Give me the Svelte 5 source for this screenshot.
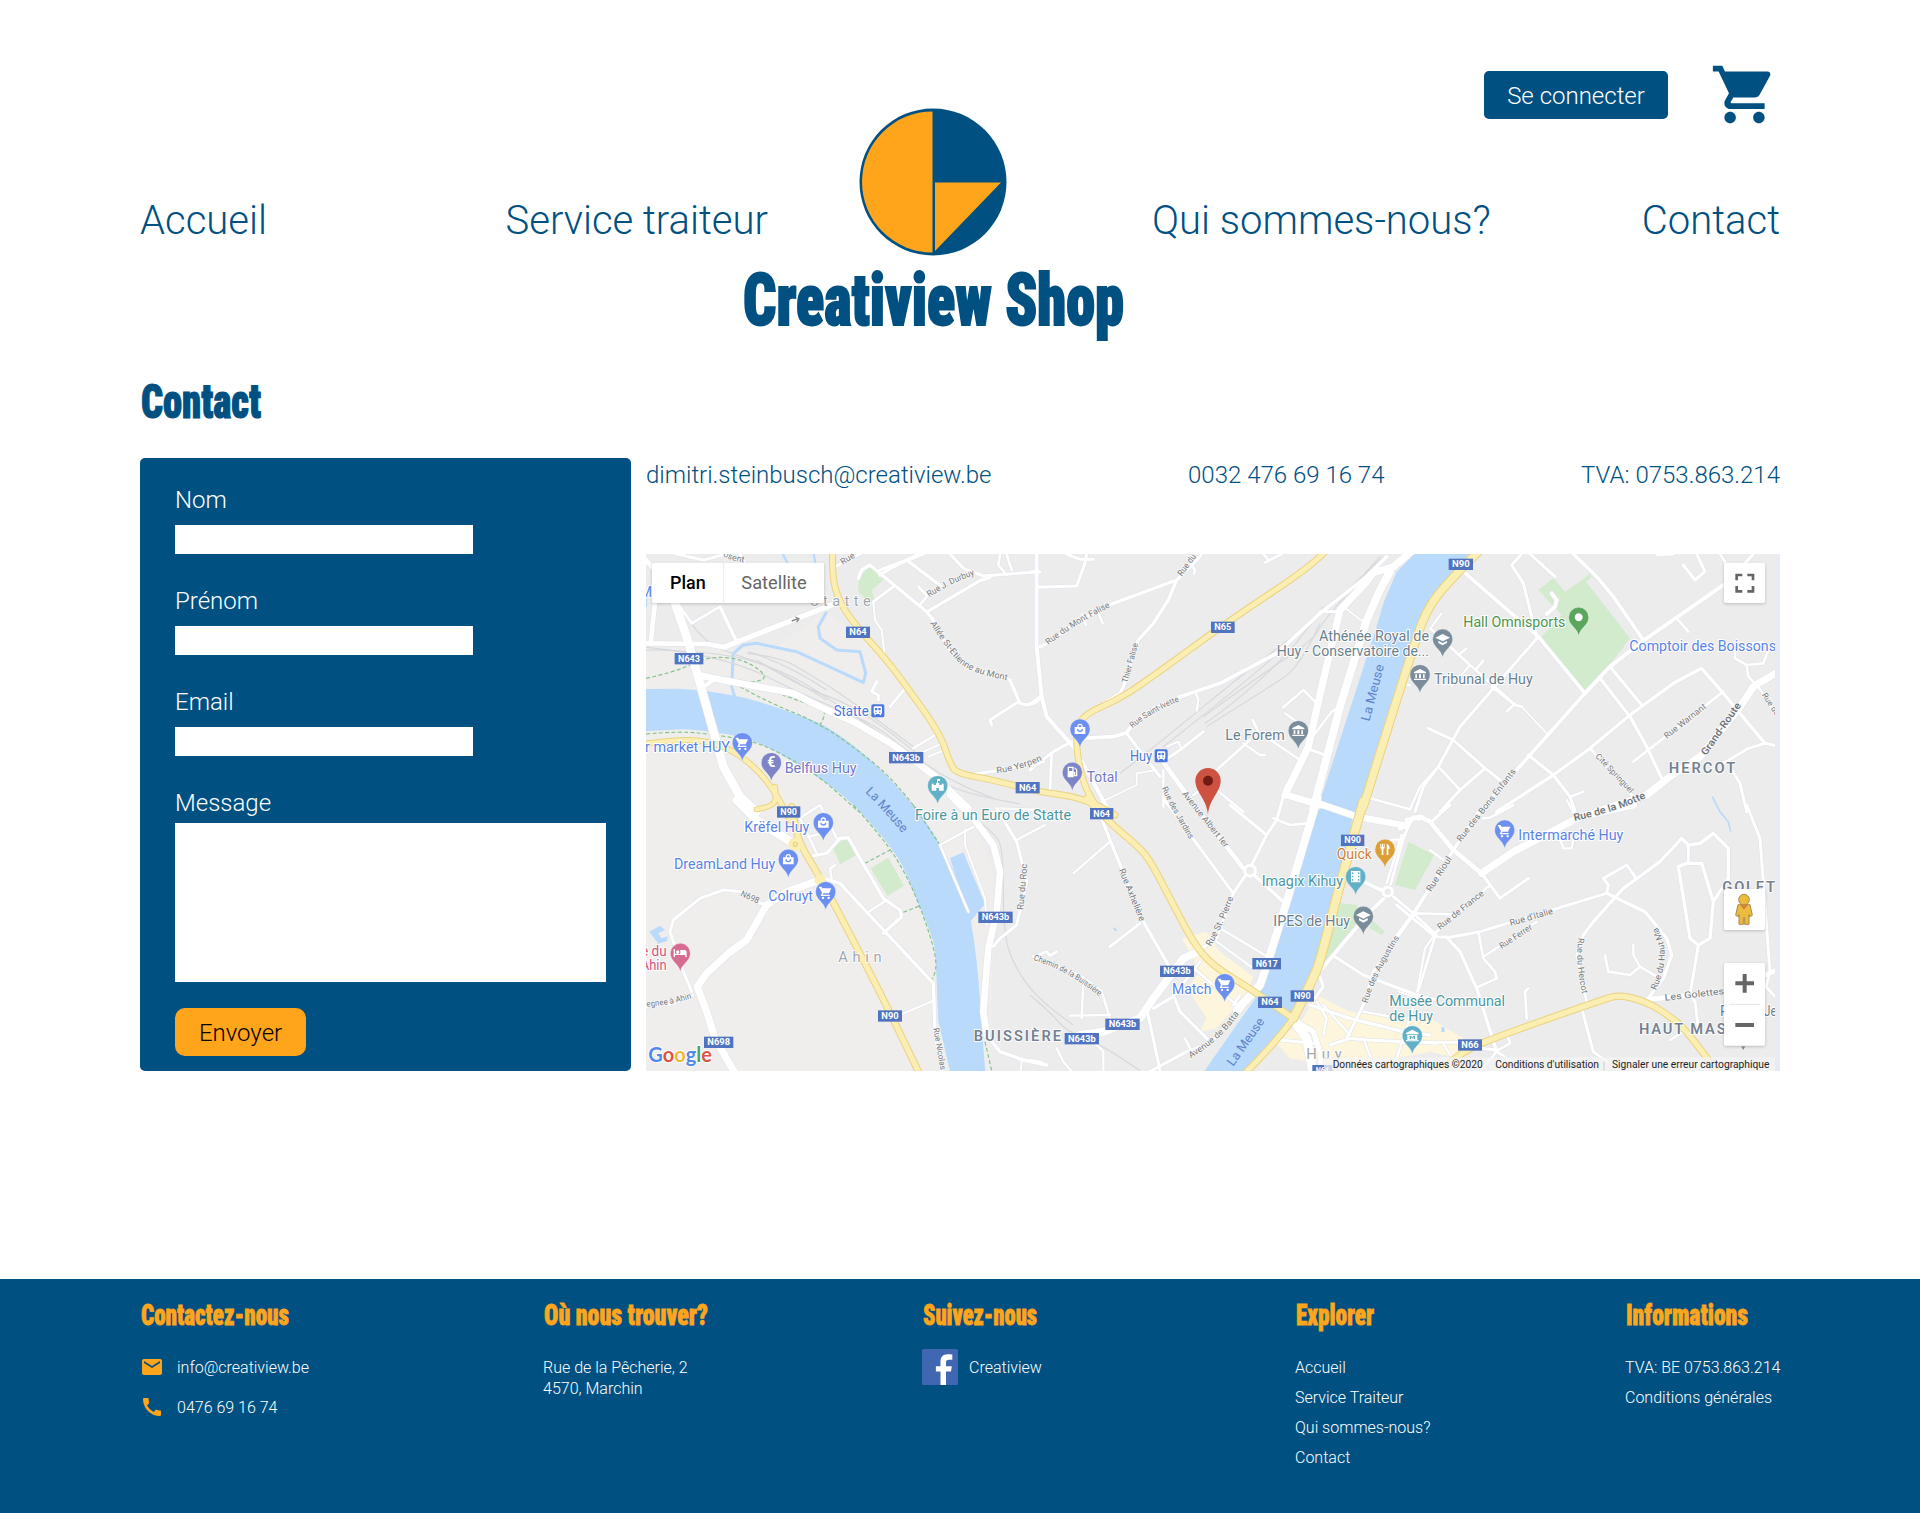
<script>
  // The map is drawn in a 3402 x 1551 space, split in six tiles with their own origin.
  const origins = {
    a: [-18, -42], b: [1152, -42], c: [2262, -42],
    d: [-18, 753], e: [1152, 753], f: [2262, 753]
  };
  const at = (t, dx = 0, dy = 0) => `translate(${origins[t][0] + dx} ${origins[t][1] + dy})`;
  const pts = (s) => s.trim().split(/\s+/).map((p) => p.split(',').map(Number));
  const line = (s) => 'M' + pts(s).map((p) => p.join(' ')).join('L');
  // Rounds the inner vertices of a polyline through its midpoints.
  const smooth = (s) => {
    const p = pts(s);
    if (p.length < 3) return line(s);
    let d = `M${p[0][0]} ${p[0][1]}`;
    for (let i = 1; i < p.length - 1; i++) {
      const last = i === p.length - 2;
      const ex = last ? p[i + 1][0] : (p[i][0] + p[i + 1][0]) / 2;
      const ey = last ? p[i + 1][1] : (p[i][1] + p[i + 1][1]) / 2;
      d += `Q${p[i][0]} ${p[i][1]} ${ex} ${ey}`;
    }
    return d;
  };
  const length = (s) => {
    const p = pts(s);
    let n = 0;
    for (let i = 1; i < p.length; i++) n += Math.hypot(p[i][0] - p[i - 1][0], p[i][1] - p[i - 1][1]);
    return n * (p.length > 2 ? 0.97 : 1);
  };

  const roadText = {
    a: `10|240,200 290,305;8|95,165 155,250 240,200;14|45,190 32,310;16|255,320 600,185;14|18,310 200,312 255,322;14|18,60 60,110
26|105,190 140,290 180,430 250,680 300,770 350,815;20|175,405 220,415 460,460 540,500 650,550 760,615 880,705 985,805
12|185,445 222,418;10|655,115 665,90 690,75 860,215 880,240 920,320 980,380 1110,420 1140,490 1160,495 1185,488 1205,470
10|720,90 800,60 905,140;10|800,62 850,42;10|720,105 760,80 860,30;9|930,42 970,85 1030,108 1200,95;10|862,215 1020,122 1050,112
8|835,140 862,168 838,196;9|590,78 660,42;8|700,185 760,140;6|700,185 705,240 725,270 735,355;9|1055,555 1050,540 1135,485
9|710,425 695,455 715,465 715,480;8|750,500 800,440;7|820,625 895,580;6|840,640 910,608;6|865,650 915,630;9|985,705 1070,692 1210,665
8|1080,42 1075,75 1100,105;8|1100,42 1115,90;9|110,42 190,60 260,42;8|300,42 315,68`,
    b: `12|20,42 20,320 35,470 50,530 130,620 165,680 235,810;9|20,142 140,138 165,70 170,42;9|110,42 150,58 190,58;8|0,95 20,95;8|0,492 35,465
10|30,320 50,312 140,245 250,190 440,120 500,60 515,42;10|440,120 415,180 370,250 325,300 280,440 270,460 220,490
7|155,222 168,255;7|200,205 218,250;8|480,70 495,90 492,102;8|700,42 715,60;8|705,68 755,42
11|160,595 250,590 290,578 310,550 370,505 450,470 570,430 740,340 870,220 1010,110 1070,50;9|290,580 390,710;9|0,690 70,635 135,600;8|65,640 60,750
7|498,460 505,480 500,512;5|1008,252 940,200;22|1150,30 1090,80 1030,98 1010,125 930,210 880,420 835,620 765,765
24|1080,95 1050,150 1010,240 930,500 850,805;8|870,215 930,215;8|760,502 820,450 858,488;7|765,520 815,556;9|830,625 885,645
7|840,600 905,515 930,498;8|668,540 685,575 810,660;7|640,610 690,645 705,645;8|560,690 610,645 660,600;14|402,670 490,790 640,985
9|405,660 450,630 520,575;6|410,620 445,605 455,630;7|400,690 400,750 400,800;8|490,765 520,745;8|560,750 640,815;5|215,785 320,735 320,700 380,690
20|770,765 870,795;7|1120,430 1140,436;8|1020,775 1140,808;7|1140,808 1170,740 1215,690`,
    c: `11|190,95 415,290 555,460;11|520,42 590,110 640,170 730,300;9|365,42 335,75 370,130 390,210 410,290;9|390,42 465,110
12|440,222 465,200 470,180 455,160;12|555,460 630,380 730,302 970,135;11|555,460 390,645 230,825;9|415,290 180,560 115,680 70,740 45,815
8|275,440 345,495 365,500;5|365,500 440,580;10|598,412 690,530 740,620 785,715;10|630,380 725,495
10|290,815 460,705 570,625 690,525 820,430 905,385 970,460 1095,610;8|700,665 970,455;9|570,625 700,770;10|385,645 460,705 510,770 525,815;8|510,770 550,755
9|85,565 160,600 250,680 300,720;9|255,685 180,750 120,815;8|115,680 180,750;8|830,235 865,275;9|850,75 885,120 915,95 890,42;8|960,42 985,80;10|1060,42 1000,110
9|970,670 1045,625 1095,610 1130,618;9|990,680 1020,730 1040,815;8|1090,305 1005,320 1005,355 1040,375 1090,370 1105,330;8|1040,375 1045,410 1075,440
8|1075,440 1125,520;8|90,265 210,375 290,445 340,490;7|175,345 200,325;8|230,385 250,362;6|155,440 210,375;6|95,260 125,220;7|345,490 320,515;9|770,45 820,42
22|590,815 740,765 810,710 900,650 1020,500 1060,440 1130,398;6|345,270 370,255`,
    d: `9|155,560 130,500 90,380 100,345 180,280 250,255 310,260 360,295 390,298;22|540,225 440,260 380,300 320,405 265,445 200,505 172,545 200,620 225,700 285,805
26|290,-15 350,45 465,118;6|18,606 100,598 160,570;7|480,40 540,0 590,100;7|480,40 530,145;6|505,95 550,85;10|520,152 560,145 600,100 625,98 660,160 730,280 780,315 785,335 730,385
7|575,220 570,192 585,180;10|560,222 600,235 880,535 885,680 905,805;7|680,325 740,285;6|780,630 885,585;7|900,120 1000,65;7|900,120 985,320;6|975,75 975,120 1035,280 1040,360
20|930,-30 1000,40 1060,120 1080,200 1070,320 1045,430 1030,620 1040,690;10|1040,690 1080,740 1150,765 1220,780;6|1145,765 1142,800
9|1060,425 1080,400 1130,360 1160,230 1130,110 1070,10;7|1130,105 1215,60;7|1080,10 1200,15`,
    e: `10|215,40 240,105 340,350 415,480;7|240,110 130,205;8|330,355 240,425;24|505,440 460,460 370,580 330,640 220,680 150,690
9|350,610 392,805;9|370,610 430,575 510,470;9|430,570 450,620 540,710;8|480,480 620,600 670,560;9|600,0 710,90;9|770,-60 740,45 710,90 660,190 610,265
8|730,40 780,60 830,55;9|400,-20 610,265;9|610,265 560,400 500,440;10|675,212 770,300;7|570,370 720,460;6|560,410 670,490;9|350,805 470,740 540,715 630,620 690,540;8|630,570 610,600
8|10,455 50,440 60,452 80,440;8|10,455 150,510 215,560 240,640;7|160,530 155,640;7|120,632 240,630;7|170,690 220,740 220,805;7|80,730 100,770 130,805;8|0,765 35,772
7|465,700 490,750;11|1000,230 1060,258;12|1060,282 1015,325 860,510;9|1090,275 1150,325 1220,390;9|1082,238 1120,100 1145,40;8|1070,235 1115,90
9|1085,105 1115,105;9|915,455 1000,510 1160,570 1220,585;9|950,700 1000,600 1030,500 1150,330 1280,120;10|840,600 960,640 1120,680 1200,690;9|900,720 960,700 1010,705 1220,715
28|790,645 830,700 850,805;16|800,650 850,680 870,740 875,805;9|855,580 880,545 870,515;7|860,590 890,640 880,690;9|750,705 850,715;24|620,615 690,540 720,450 770,290 862,-20
20|850,-10 980,35 1130,62;14|1110,70 1130,62 1150,38 1170,40;7|1000,620 1110,640;7|960,690 880,600;7|1160,570 1185,430 1220,380;7|1000,700 1040,805`,
    f: `7|500,-15 525,30;8|250,40 270,38 340,0;9|95,50 150,0;14|20,45 60,35 90,50 160,135 245,205;22|245,205 340,140 540,35 700,0;9|245,205 300,280 385,220
9|265,245 110,380;9|-10,300 105,395 150,397 240,380 620,265 625,240 610,220 680,180 705,215;10|140,397 180,440 230,550 290,740
8|230,548 290,520 285,500 250,460 235,380;7|250,455 410,350;8|105,395 45,590 -10,760;8|40,325 170,328;9|240,15 160,135 40,325 -20,405
10|550,390 580,350 670,250 780,170 845,100 865,120 900,115 940,85 985,130 985,220 940,290 930,400 895,420 870,400 835,185 860,175 905,175 940,290;9|865,120 865,175
9|895,420 870,570 885,590 895,670;10|620,265 735,320 800,400 815,450 790,520 745,580;8|550,390 530,450 560,590;8|615,450 625,500 690,510 720,485 770,515;7|720,485 700,450 700,420
15|745,583 980,560 1130,495;8|380,640 375,560 385,550;9|545,610 580,740 620,770;8|285,740 330,715 320,680;8|0,713 180,712;8|240,800 290,740 330,765
7|480,100 490,130 515,130 520,105;7|90,135 130,165;7|130,715 150,750;9|240,730 290,735;7|810,705 850,680;9|1040,0 1080,100 1110,500 1098,545 1130,580;6|-5,560 40,575`
  };
  const roads = Object.entries(roadText).flatMap(([t, s]) =>
    s.split(/[;\n]/).map((r) => {
      const [w, p] = r.split('|');
      return { t, w: +w, d: line(p) };
    })
  );

  const yellow = [
    ['a', 15, '578,30 575,110 600,190 650,260 740,360 800,440 900,580 930,670 950,700 1060,720 1200,757 1340,775 1425,825'],
    ['a', 13, '10,612 130,595 230,610 310,650 400,740 450,840'],
    ['a', 12, '405,740 410,775 395,800 350,808'],
    ['d', 16, '455,5 465,60 480,118 530,200 600,330 740,600 840,810'],
    ['b', 15, '890,30 850,75 600,240 340,430 260,480 170,520 140,560 140,640 165,750 200,800'],
    ['c', 22, '240,30 170,100 90,190 45,300 -110,800'],
    ['e', 24, '1000,-10 940,200 870,470 850,520 790,640'],
    ['e', 16, '790,640 740,710 645,805'],
    ['e', 16, '170,-20 235,50 320,120 360,165 430,300 500,430 560,490 660,550 790,640'],
    ['f', 16, '110,810 170,745 320,685 620,580 660,570 740,590 820,640 870,690 955,805']
  ];

  const rails = [
    ['a', '18,330 240,332 450,400 600,500 740,590 870,700 960,760 1140,792'], ['a', '18,322 250,345 500,470 700,550 790,625 940,730 1060,775'],
    ['a', '320,340 420,350 520,410 570,440 700,530 820,620'], ['a', '120,200 170,280 240,330 400,380 560,480'],
    ['a', '325,335 440,370 560,450'], ['a', '350,360 480,440 600,480 720,550 830,640'],
    ['b', '1075,50 870,230 640,400 400,600 270,700'], ['b', '1060,50 900,200 800,290 630,440 400,620'],
    ['b', '1050,50 880,240 850,300 700,400 520,530'], ['b', '870,250 810,380 720,440 530,560'], ['b', '880,200 800,320 600,500 525,550'],
    ['d', '980,20 1060,80 1090,130 1090,380 1120,480 1200,590 1300,660'], ['e', '0,570 60,620 110,680 220,720 330,797']
  ];

  const dashes = [
    ['a', '18,415 110,395 200,350 300,355 370,395 375,425 300,430'], ['a', '300,420 420,462 540,505 560,520 540,555'],
    ['a', '300,440 380,485 540,550 680,650 770,730 835,815'], ['a', '18,582 120,573 230,585 350,605 470,665 570,735 655,815'],
    ['d', '820,0 900,120'], ['d', '640,0 730,100 800,210 850,330 885,440 890,500 875,525'], ['d', '675,175 750,135'], ['d', '790,322 840,302'], ['d', '1035,710 1055,797']
  ];

  const greens = [
    ['a', '655,125 685,75 730,120 695,150 705,185 690,190 655,155'],
    ['c', '415,150 460,115 495,155 550,118 570,100 575,110 558,125 690,295 640,360 555,455 425,290 485,225'],
    ['d', '575,120 625,100 650,150 600,178'], ['d', '692,190 745,158 792,243 742,273'],
    ['e', '1135,110 1213,150 1155,255 1095,240'], ['e', '930,295 980,300 995,340 960,400 870,500 890,420'], ['e', '1025,345 1065,380 1055,390 1020,370']
  ];
  const creams = [
    ['e', '455,400 530,380 570,440 670,515 640,580 560,670 510,680 530,640 470,550 510,500'],
    ['e', '860,570 960,620 1100,640 1200,640 1300,700 1290,760 1200,740 960,790 780,760 735,710 820,640']
  ];

  const shields = [
    ['a', 'N64', 618, 260, 72], ['a', 'N643', 104, 339, 86], ['a', 'N643b', 747, 636, 103], ['a', 'N64', 1127, 726, 72],
    ['b', 'N65', 543, 245, 71], ['c', 'N90', 146, 56, 73], ['d', 'N90', 411, 4, 70], ['d', 'N643b', 1015, 320, 103],
    ['d', 'N90', 714, 616, 72], ['d', 'N698', 192, 695, 88], ['e', 'N64', 180, 9, 70], ['e', 'N90', 933, 89, 70],
    ['e', 'N643b', 390, 482, 102], ['e', 'N617', 667, 459, 86], ['e', 'N64', 684, 575, 72], ['e', 'N90', 782, 556, 70],
    ['e', 'N643b', 226, 641, 103], ['e', 'N643b', 104, 684, 103], ['f', 'N66', 174, 703, 72], ['e', 'N64', 847, 780, 60]
  ];

  const blue = '#5a83e6', violet = '#7478c4', slate = '#6a7f8d', teal = '#4b979f';
  const labels = [
    ['a', 'r market HUY', 15, 637, 255, blue], ['a', 'Belfius Huy', 434, 698, 216, violet], ['a', 'Statte', 581, 527, 105, '#4a76d8'],
    ['b', 'Total', 170, 725, 93, violet], ['b', 'Huy', 300, 663, 66, '#4a76d8'], ['b', 'Le Forem', 586, 601, 178, slate],
    ['b', 'Athénée Royal de', 867, 304, 330, slate], ['b', 'Huy - Conservatoire de...', 740, 347, 457, slate],
    ['c', 'Hall Omnisports', 190, 261, 306, '#4c9450'], ['c', 'Tribunal de Huy', 102, 433, 296, slate], ['c', 'Comptoir des Boissons', 688, 334, 440, blue],
    ['d', 'Foire à un Euro de Statte', 825, 45, 468, teal], ['d', 'Krëfel Huy', 313, 82, 195, blue], ['d', 'DreamLand Huy', 102, 192, 304, blue],
    ['d', 'Colruyt', 385, 288, 134, blue], ['d', 'e du', 3, 452, 77, '#d3527f'], ['d', 'Ahin', 2, 495, 78, '#d3527f'],
    ['e', 'Quick', 920, 162, 106, '#cf7f2f'], ['e', 'Imagix Kihuy', 695, 244, 244, teal], ['e', 'IPES de Huy', 730, 362, 230, slate],
    ['e', 'Match', 426, 567, 118, blue], ['e', 'Musée Communal', 1078, 604, 347, teal], ['e', 'de Huy', 1078, 648, 131, teal],
    ['f', 'Intermarché Huy', 355, 105, 315, blue], ['f', 'P', 960, 634, 26, slate], ['f', 'Je', 1092, 634, 38, slate], ['a', 'M', 0, 172, 36, blue]
  ];
  const places = [
    ['c', 'HERCOT', 806, 699, 200, true], ['d', 'BUISSIÈRE', 1001, 707, 262, true], ['f', 'GOLET', 967, 262, 158, true],
    ['f', 'HAUT MAS', 717, 687, 260, true], ['a', 'Statte', 510, 198, 182, false], ['d', 'Ahin', 595, 471, 130, false], ['e', 'Huy', 829, 762, 106, false]
  ];

  const streets = [
    ['a', 'osent', '248,48 280,64 315,68', 26], ['a', 'Rue', '608,75 648,50', 26], ['a', 'Rue J. Durbuy', '868,172 930,130 1010,102', 26],
    ['a', 'Allée St-Etienne au Mont', '870,250 925,335 990,400 1108,422', 26], ['a', 'Rue Yerpen', '1070,700 1140,692 1212,658', 26],
    ['b', 'Rue du Mont Falise', '55,315 130,255 248,197', 26], ['b', 'Rue du', '455,110 500,48', 26], ['b', 'Thier Falise', '292,430 325,310', 25],
    ['b', 'Rue Saint-Ivette', '308,565 365,515 453,482', 25], ['b', 'Rue des Jardins', '395,745 420,800 482,905', 25], ['b', 'Avenue Albert Ier', '455,762 585,925', 26],
    ['c', 'Rue Warnant', '800,597 922,502', 26], ['c', 'Cité Springuel', '585,650 692,762', 25], ['c', 'Rue de', '1085,465 1128,530', 24],
    ['f', 'Rue des Bons Enfants', '182,112 350,-102', 26], ['d', 'N698', '300,272 355,297', 26], ['d', 'egnee à Ahin', '20,605 90,602 160,578', 25],
    ['d', 'Rue Nicolas', '880,670 902,797', 25], ['d', 'Rue du Roc', '1150,315 1162,175', 27], ['e', 'Rue Axhelière', '266,195 330,352', 27],
    ['e', 'Rue St. Pierre', '542,425 585,350 612,272', 27], ['e', 'Chemin de la Buissière', '10,465 120,500 212,578', 25],
    ['e', 'Avenue de Batta', '482,760 575,705 630,622', 26], ['e', 'Rue des Augustins', '1013,595 1035,510 1112,393', 26],
    ['f', 'Rue Rioul', '93,262 157,160', 27], ['f', 'Rue de France', '120,375 255,267', 26], ['f', "Rue d'Italie", '332,363 462,325', 27],
    ['f', 'Rue Ferrer', '305,432 400,370', 26], ['f', 'Rue du Hercot', '535,398 525,475 548,572', 26], ['f', 'Rue du Haut Mas', '768,557 820,440 768,362', 26],
    ['f', 'Les Golettes', '795,587 975,567', 28], ['c', 'Grand-Route', '918,648 1025,495', 30], ['f', 'Rue de la Motte', '523,48 650,20 745,-25', 30]
  ];
  const rivers = [['a', 'La Meuse', '675,757 720,800 792,885'], ['b', 'La Meuse', '1018,545 1063,375'], ['e', 'La Meuse', '610,785 706,648']];

  const B = '#6c8ff0', V = '#7d84c8', G = '#7b8d9a', T = '#61b0c7';
  const pins = [
    ['a', 307, 608, B, 'cart'], ['a', 394, 668, V, 'euro'], ['a', 893, 737, T, 'castle'], ['b', 150, 567, B, 'bag'], ['b', 127, 697, V, 'fuel'],
    ['b', 805, 572, G, 'bank'], ['c', 128, 297, G, 'edu'], ['c', 60, 404, G, 'bank'], ['c', 536, 232, '#5ba65c', 'dot'], ['d', 550, 53, B, 'bag'],
    ['d', 445, 163, B, 'bag'], ['d', 557, 260, B, 'cart'], ['d', 121, 445, '#d76c93', 'bed'], ['e', 1065, 133, '#dd9f35', 'fork'], ['e', 977, 215, T, 'film'],
    ['e', 1000, 334, G, 'edu'], ['e', 584, 536, B, 'cart'], ['e', 1147, 692, T, 'museum'], ['f', 314, 75, B, 'cart']
  ];
  const glyphs = {
    cart: 'M-19-15h7l2 5h27l-7 15h-17l-2 4h21v4h-27l4-10-8-14h-2zM-8 15a3.5 3.5 0 1 0 .1 0zM9 15a3.5 3.5 0 1 0 .1 0z',
    bag: 'M-16-6h8v-2a8 8 0 0 1 16 0v2h8v21h-32zM-4-6h8v-2a4 4 0 0 0-8 0zM-9 0a9 9 0 0 0 18 0h-4a5 5 0 0 1-10 0z',
    castle: 'M-18-6h6v4h7v-6h3v-12h9v6h-6v6h4v6h7v-4h6v21h-14v-8h-8v8h-14z',
    fuel: 'M-14-17h18v16h5v10h2v-16l-5-5 2-3 7 7v20h-10v-10h-1v13h-18zM-10-13v9h10v-9z',
    bank: 'M0-17l18 9v4h-36v-4zM-14-1h5v11h-5zM-3-1h6v11h-6zM9-1h5v11h-5zM-18 12h36v4h-36z',
    edu: 'M0-15l22 11-22 11-22-11zM-13 5l13 7 13-7v7l-13 7-13-7z',
    dot: 'M0-12a12 12 0 1 0 .1 0z',
    bed: 'M-20-13h4v14h16v-11h12a7 7 0 0 1 7 7v14h-4v-6h-31v6h-4zM-8-9a5 5 0 1 0 .1 0z',
    fork: 'M-14-17h3v10h2v-10h3v10h2v-10h3v13l-4 5v16h-5v-16l-4-5zM5-17q9 2 9 16h-4v18h-5z',
    film: 'M-14-17h28v34h-28zM-11-13v5h4v-5zM-11-3v5h4v-5zM-11 7v5h4v-5zM7-13v5h4v-5zM7-3v5h4v-5zM7 7v5h4v-5z',
    museum: 'M0-18l19 10v4h-38v-4zM-15-2h30v16h-30zM-8 11h4v-7l4 5 4-5v7h4v-11h-4l-4 5-4-5h-4zM-19 13h38v4h-38z',
    euro: ''
  };

  const fields = ['Nom', 'Prénom', 'Email'];
  const explore = ['Accueil', 'Service Traiteur', 'Qui sommes-nous?', 'Contact'];
</script>

{#snippet display(text, w, size, cls)}
  <svg class="display {cls}" width={w} height={size * 1.2} role="img" aria-label={text}>
    <text x="1" y={size} font-size={size} textLength={w - 1} lengthAdjust="spacingAndGlyphs">{text}</text>
  </svg>
{/snippet}

{#snippet pin([t, x, y, color, icon])}
  <g transform={at(t, x, y)}>
    <path class="pin" fill={color} d="M0 55C-4 32-30 24-30 0A30 30 0 0 1 30 0C30 24 4 32 0 55z" />
    {#if icon === 'euro'}
      <text class="euro" x="0" y="14">€</text>
    {:else}
      <path fill="#fff" fill-rule="evenodd" d={glyphs[icon]} />
    {/if}
  </g>
{/snippet}

<div class="page">
  <header>
    <div class="account">
      <button class="login">Se connecter</button>
      <svg class="cart" viewBox="0 0 24 24"><path d="M7 18c-1.1 0-1.99.9-1.99 2S5.9 22 7 22s2-.9 2-2-.9-2-2-2zM1 2v2h2l3.6 7.590-1.350 2.450c-.160.280-.250.610-.250.960 0 1.100.9 2 2 2h12v-2H7.420c-.140 0-.250-.110-.250-.250l.030-.120.900-1.630h7.450c.750 0 1.410-.410 1.750-1.030l3.580-6.490c.080-.140.120-.310.120-.480 0-.550-.450-1-1-1H5.210l-.940-2H1zm16 16c-1.100 0-1.990.9-1.990 2s.890 2 1.990 2 2-.9 2-2-.9-2-2-2z" /></svg>
    </div>
    <nav>
      <div class="links"><a href="#accueil">Accueil</a><a href="#service">Service traiteur</a></div>
      <div class="brand">
        <svg width="148" height="148" viewBox="0 0 148 148">
          <circle cx="74" cy="74" r="73.5" fill="#005082" />
          <path d="M73.5 3.5a70.5 70.5 0 0 0 0 141z" fill="#ffa51c" />
          <path d="M76 74.5h66L76 143z" fill="#ffa51c" />
        </svg>
        {@render display('Creatiview Shop', 382, 73, 'title')}
      </div>
      <div class="links"><a href="#qui">Qui sommes-nous?</a><a href="#contact">Contact</a></div>
    </nav>
  </header>

  <main>
    <h1>{@render display('Contact', 121, 48, 'heading')}</h1>
    <div class="content">
      <form>
        {#each fields as f}
          <label class="field"><span>{f}</span><input type="text" /></label>
        {/each}
        <label class="message"><span>Message</span><textarea></textarea></label>
        <button type="button" class="send">Envoyer</button>
      </form>
      <section>
        <div class="info"><span>dimitri.steinbusch@creatiview.be</span><span>0032 476 69 16 74</span><span>TVA: 0753.863.214</span></div>
        <svg class="map" viewBox="0 0 3402 1551" preserveAspectRatio="none">
          <rect width="3402" height="1551" fill="#ececec" />
          <path transform={at('a')} fill="#efeeed" d="M0 320L400 330L560 210L740 360L900 580L950 720L1010 860L1060 1000L1060 1220L1050 1600L0 1600z" />
          {#each creams as [t, p]}<path transform={at(t)} d={line(p) + 'z'} fill="#fdf5dc" />{/each}
          {#each greens as [t, p]}<path transform={at(t)} d={line(p) + 'z'} fill="#d2ebcd" />{/each}
          <g class="water">
            <path d="M0 405L100 404Q180 408 270 426T522 508Q590 545 662 608T812 768Q850 815 882 873Q930 950 967 1073L975 1105Q985 1160 992 1223T1003 1353T1018 1551H912Q900 1500 877 1403L872 1283Q870 1230 867 1193T832 1083T782 963T712 853T622 753T542 688T432 618T312 558T192 533T112 526L0 532z" />
            <path d="M912 913L952 895L1017 1050L972 1103L940 1000z" />
            <path d="M2305 0H2470L2390 90L2325 200L2272 360L2170 710L2150 750L2122 785L2082 985L2022 1195L1982 1295L1942 1393L1897 1443L1802 1551H1675L1842 1313L1872 1195L1922 1053L2017 757L2192 218L2212 148L2252 53z" />
            <path transform={at('d')} d="M28 380L60 362L75 375L55 385L65 400L83 393L82 407L55 416z" />
            <path transform={at('f')} d="M124 667h10v14h-10z" />
            <path transform={at('e')} d="M248 370l6-3 8 9-6 3z" />
          </g>
          <g fill="none" stroke="#badafc">
            <path transform={at('a')} stroke-width="9" stroke-linejoin="round" d="M284 470L275 440L280 340L310 315L350 310L470 335L600 395L670 428L677 400L660 335L590 330L540 295L535 260L560 215" />
            <path transform={at('a')} stroke-width="7" d="M428 42L443 70M521 42L526 70M18 170V200" />
            <path transform={at('c')} stroke-width="5" d="M937 770L960 815L985 845L992 875" />
          </g>
          <g class="rails">{#each rails as [t, p]}<path transform={at(t)} d={smooth(p)} />{/each}</g>
          <g class="dashes">{#each dashes as [t, p]}<path transform={at(t)} d={smooth(p)} />{/each}</g>
          <g class="roads">
            {#each roads as r}<path transform={at(r.t)} d={r.d} stroke="#dfe2ea" stroke-width={r.w + 3} />{/each}
            {#each roads as r}<path transform={at(r.t)} d={r.d} stroke="#fff" stroke-width={r.w} />{/each}
            <circle transform={at('e')} cx="660" cy="197" r="16" fill="#ececec" stroke="#fff" stroke-width="9" />
            <circle transform={at('e')} cx="1073" cy="260" r="14" fill="#ececec" stroke="#fff" stroke-width="9" />
            {#each yellow as [t, w, p]}<path transform={at(t)} d={smooth(p)} stroke="#ebd281" stroke-width={w + 6} />{/each}
            {#each yellow as [t, w, p]}<path transform={at(t)} d={smooth(p)} stroke="#faeeb2" stroke-width={w} />{/each}
            <circle transform={at('d')} cx="466" cy="118" r="12" fill="#faeeb2" stroke="#faeeb2" stroke-width="18" />
            <circle transform={at('d')} cx="466" cy="118" r="6" fill="none" stroke="#ebd281" stroke-width="4" />
            <circle transform={at('d')} cx="540" cy="225" r="12" fill="#faeeb2" stroke="#faeeb2" stroke-width="10" />
          </g>
          <path transform={at('a')} d="M455 243L475 236M466 231L477 236L470 246" fill="none" stroke="#888" stroke-width="4" />

          {#each rivers as [t, text, p], i}
            <g transform={at(t)}>
              <path id="river-{i}" d={smooth(p)} fill="none" />
              <text class="river"><textPath href="#river-{i}" textLength={length(p) - 2} lengthAdjust="spacingAndGlyphs">{text}</textPath></text>
            </g>
          {/each}
          {#each streets as [t, text, p, size], i}
            <g transform={at(t)}>
              <path id="street-{i}" d={smooth(p)} fill="none" />
              <text class="street" class:main={size > 28} font-size={size}><textPath href="#street-{i}" textLength={length(p) - 2} lengthAdjust="spacingAndGlyphs">{text}</textPath></text>
            </g>
          {/each}
          {#each places as [t, text, x, y, w, strong]}
            <text class="place" class:strong transform={at(t)} {x} {y} textLength={w}>{text}</text>
          {/each}
          {#each shields as [t, text, x, y, w]}
            <g transform={at(t, x, y)}>
              <rect width={w} height="34" fill="#5074c0" />
              <text class="shield" x="10" y="26" textLength={w - 20} lengthAdjust="spacingAndGlyphs">{text}</text>
            </g>
          {/each}
          {#each labels as [t, text, x, y, w, color]}
            <text class="poi" transform={at(t)} {x} {y} fill={color} textLength={w} lengthAdjust="spacingAndGlyphs">{text}</text>
          {/each}
          {#each [['a', 694, 493], ['b', 374, 628]] as [t, x, y]}
            <g transform={at(t, x, y)}>
              <rect width="39" height="39" rx="5" fill="#4a78e0" />
              <path fill="#fff" fill-rule="evenodd" d="M7 10q0-4 4-4h17q4 0 4 4v16q0 3-4 3l3 4h-4l-3-4h-9l-3 4H8l3-4q-4 0-4-3zM11 11v7h7v-7zM21 11v7h7v-7zM12 22v3h4v-3zM23 22v3h4v-3z" />
            </g>
          {/each}
          {#each pins as p}{@render pin(p)}{/each}
          <g transform={at('b', 534, 722)}>
            <path d="M0 103C-3 55-38 34-38 0A38 38 0 0 1 38 0C38 34 3 55 0 103z" fill="#cd5241" />
            <circle r="15" fill="#701c15" />
          </g>

          <rect x="3387" width="15" height="1551" fill="#e8ebf2" />
          <g transform={at('e')}><rect x="882" y="757" width="1353" height="44" fill="#f4f4f4" opacity=".75" /></g>
          <g class="legal">
            <text transform={at('e')} x="908" y="788" textLength="450" lengthAdjust="spacingAndGlyphs">Données cartographiques ©2020</text>
            <text transform={at('f')} x="286" y="788" textLength="311" lengthAdjust="spacingAndGlyphs">Conditions d'utilisation</text>
            <text transform={at('f')} x="636" y="788" textLength="472" lengthAdjust="spacingAndGlyphs">Signaler une erreur cartographique</text>
            <path transform={at('f')} d="M612 770v27" stroke="#ccc" stroke-width="3" />
          </g>
          <text class="google" transform={at('d')} x="25" y="770" textLength="191" lengthAdjust="spacingAndGlyphs"><tspan fill="#5487ec">G</tspan><tspan fill="#dc5445">o</tspan><tspan fill="#edb83a">o</tspan><tspan fill="#5487ec">g</tspan><tspan fill="#4ba55c">l</tspan><tspan fill="#dc5445">e</tspan></text>

          <g class="controls" transform={at('a')}>
            <rect x="36" y="68" width="516" height="121" rx="5" />
            <path d="M251 68v121" stroke="#ebebeb" stroke-width="3" />
            <text class="on" x="90" y="148" textLength="107" lengthAdjust="spacingAndGlyphs">Plan</text>
            <text x="304" y="148" textLength="196" lengthAdjust="spacingAndGlyphs">Satellite</text>
          </g>
          <g class="controls" transform={at('c')}>
            <rect x="972" y="68" width="123" height="121" rx="5" />
            <path d="M1010 121v-16h17M1042 105h17v16M1059 138v16h-17M1027 154h-17v-16" fill="none" stroke="#666" stroke-width="8" />
          </g>
          <g class="controls" transform={at('f')}>
            <rect x="972" y="252" width="123" height="123" rx="5" />
            <g fill="#ecba3d" stroke="#a88a4c" stroke-width="3">
              <path d="M1014 299h36l7 32-8 4-2-6v29h-13v-20h-4v20h-13v-29l-2 6-8-4z" />
              <circle cx="1032" cy="284" r="16" />
            </g>
            <path d="M1020 299h24l-12 15z" fill="#d4813d" />
            <rect x="972" y="474" width="123" height="248" rx="5" />
            <path d="M987 598h93" stroke="#e6e6e6" stroke-width="3" />
            <path d="M1006 535h56M1034 507v56M1006 660h56" stroke="#666" stroke-width="12" />
            <path d="M1023 724h13l-6 11z" fill={G} />
          </g>
        </svg>
      </section>
    </div>
  </main>

  <footer>
    <div>
      {@render display('Contactez-nous', 149, 29, 'foot')}
      <p class="row"><svg viewBox="0 0 24 24"><path d="M20 4H4c-1.100 0-1.990.9-1.990 2L2 18c0 1.100.9 2 2 2h16c1.100 0 2-.9 2-2V6c0-1.100-.9-2-2-2zm0 4l-8 5-8-5V6l8 5 8-5v2z" /></svg>info@creatiview.be</p>
      <p class="row phone"><svg viewBox="0 0 24 24"><path d="M20.010 15.380c-1.230 0-2.420-.2-3.530-.560-.350-.120-.740-.030-1.010.240l-1.570 1.970c-2.830-1.350-5.480-3.900-6.890-6.830l1.950-1.660c.270-.280.350-.670.240-1.020-.370-1.110-.560-2.300-.560-3.530 0-.540-.450-.990-.990-.990H4.190C3.650 3 3 3.240 3 3.990 3 13.280 10.730 21 20.010 21c.710 0 .990-.630.990-1.180v-3.450c0-.540-.450-.990-.990-.990z" /></svg>0476 69 16 74</p>
    </div>
    <div>
      {@render display('Où nous trouver?', 165, 29, 'foot')}
      <p class="address">Rue de la Pêcherie, 2<br />4570, Marchin</p>
    </div>
    <div>
      {@render display('Suivez-nous', 115, 29, 'foot')}
      <p class="social">
        <svg viewBox="0 0 36 36"><rect width="36" height="36" rx="1.5" fill="#4267b2" /><path fill="#fff" d="M18.500 36V22.500h-4.600v-5.300h4.600v-4.300c0-4.900 2.600-7.600 7-7.600 2.100 0 4 .2 4.800.3v5.200h-3.400c-2.300 0-2.900 1.200-2.900 2.900v3.500h5.800l-.8 5.300h-5V36z" /></svg><span>Creatiview</span>
      </p>
    </div>
    <div>
      {@render display('Explorer', 79, 29, 'foot')}
      <ul>{#each explore as e}<li>{e}</li>{/each}</ul>
    </div>
    <div>
      {@render display('Informations', 123, 29, 'foot')}
      <ul><li>TVA: BE 0753.863.214</li><li>Conditions générales</li></ul>
    </div>
  </footer>
</div>

<style>
  :global(body) { margin: 0; background: #fff; }
  .page { display: flex; flex-direction: column; height: 1513px; font-family: Roboto, sans-serif; font-weight: 300; color: #005082; overflow: hidden; }
  svg { display: block; }
  header { box-sizing: border-box; height: 350px; padding: 60px 140px 0; }
  .account { display: flex; justify-content: flex-end; gap: 42px; height: 48px; }
  button { box-sizing: border-box; font: inherit; font-size: 24px; border: 0; padding: 2px 0 0; }
  .login { width: 184px; height: 48px; margin-top: 11px; border-radius: 5px; background: #005082; color: #fff; }
  .cart { width: 69px; height: 69px; margin-right: 1px; fill: #005082; }
  .account { gap: 42px; }
  nav { display: grid; grid-template-columns: 628px 384px 628px; }
  .links { display: flex; justify-content: space-between; padding-top: 89px; font-size: 40px; line-height: 47px; white-space: nowrap; }
  a { color: inherit; text-decoration: none; }
  .brand { display: flex; flex-direction: column; align-items: center; width: 382px; margin-left: -26px; }
  .display { overflow: visible; font-family: 'Roboto Condensed', Roboto, sans-serif; font-weight: 900; fill: currentColor; stroke: currentColor; stroke-width: 1.2px; }
  .title { margin-top: -4px; stroke-width: 2px; }
  main { padding: 0 140px; }
  h1 { box-sizing: border-box; height: 108px; margin: 0; padding-top: 20px; }
  .content { display: flex; gap: 15px; }
  form { box-sizing: border-box; width: 491px; height: 613px; padding: 28px 25px 0 35px; border-radius: 5px; background: #005082; color: #fff; font-size: 24px; line-height: 28px; }
  label { display: block; }
  label span { display: block; }
  .field { height: 101px; }
  input, textarea { display: block; box-sizing: border-box; border: 0; padding: 0; background: #fff; resize: none; border-radius: 0; }
  input { width: 298px; height: 29px; margin-top: 11px; }
  textarea { width: 431px; height: 159px; margin-top: 6px; }
  .send { width: 131px; height: 48px; margin-top: 26px; border-radius: 10px; background: #ffa51c; color: #000; }
  section { width: 1134px; }
  .info { display: flex; justify-content: space-between; height: 96px; padding-top: 3px; box-sizing: border-box; font-size: 24px; line-height: 28px; }
  .map { width: 1134px; height: 517px; overflow: hidden; }
  .water { fill: #badafc; }
  .rails { fill: none; stroke: #d6d8dc; stroke-width: 3.5px; }
  .dashes { fill: none; stroke: #83c48a; stroke-width: 3.5px; stroke-dasharray: 12 7; }
  .roads { fill: none; stroke-linecap: round; stroke-linejoin: round; }
  .map text { font-weight: 400; paint-order: stroke; }
  .map .river { font-size: 38px; fill: #5f83c9; }
  .map .street { fill: #777a7e; stroke: #f6f6f6; stroke-width: 5px; }
  .map .street.main { fill: #6a6d72; font-weight: 500; }
  .map .place { font-size: 44px; fill: #a2a6ab; stroke: #fff; stroke-width: 5px; }
  .map .place.strong { font-weight: 600; fill: #748190; }
  .map .shield { font-size: 27px; font-weight: 700; fill: #fff; }
  .map .poi { font-size: 43px; stroke: #fff; stroke-width: 6px; stroke-linejoin: round; }
  .map .euro { font-size: 42px; font-weight: 700; fill: #fff; text-anchor: middle; }
  .pin { stroke: #ffffff66; stroke-width: 2px; }
  .map .google { font-family: Lato, sans-serif; font-size: 61px; font-weight: 700; stroke: #fff; stroke-width: 5px; }
  .map .legal text { font-size: 31px; fill: #222; }
  .controls rect { fill: #fff; filter: drop-shadow(0 3px 4px #0003); }
  .map .controls text { font-size: 54px; fill: #666; }
  .map .controls .on { font-weight: 500; fill: #000; }
  footer { display: grid; grid-template-columns: 403px 379px 373px 330px 155px; margin-top: auto; height: 234px; padding: 17px 140px 0; box-sizing: border-box; background: #005082; color: #fff; font-size: 16px; line-height: 21px; white-space: nowrap; }
  .foot { color: #ffa51c; stroke-width: .8px; }
  footer p, ul { margin: 0; padding: 0; list-style: none; }
  footer div > p, footer ul { margin-top: 26px; }
  li { height: 30px; }
  .row { display: flex; align-items: center; gap: 13px; }
  footer .phone { margin-top: 19px; }
  .row svg { width: 24px; height: 24px; margin: -1.5px 0; fill: #ffa51c; }
  footer .social { display: flex; align-items: center; gap: 11px; margin-top: 18px; }
  .social svg { width: 36px; height: 36px; }
  .social span { padding-top: 2px; }
</style>
